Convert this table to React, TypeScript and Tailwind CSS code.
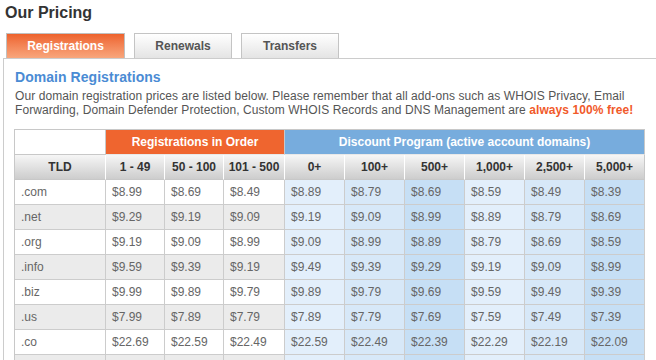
import React from "react";

const rows: [string, string[]][] = [
  [".com", ["8.99", "8.69", "8.49", "8.89", "8.79", "8.69", "8.59", "8.49", "8.39"]],
  [".net", ["9.29", "9.19", "9.09", "9.19", "9.09", "8.99", "8.89", "8.79", "8.69"]],
  [".org", ["9.19", "9.09", "8.99", "9.09", "8.99", "8.89", "8.79", "8.69", "8.59"]],
  [".info", ["9.59", "9.39", "9.19", "9.49", "9.39", "9.29", "9.19", "9.09", "8.99"]],
  [".biz", ["9.99", "9.89", "9.79", "9.89", "9.79", "9.69", "9.59", "9.49", "9.39"]],
  [".us", ["7.99", "7.89", "7.79", "7.89", "7.79", "7.69", "7.59", "7.49", "7.39"]],
  [".co", ["22.69", "22.59", "22.49", "22.59", "22.49", "22.39", "22.29", "22.19", "22.09"]],
  [".me", ["15.99", "15.89", "15.79", "15.89", "15.79", "15.69", "15.59", "15.49", "15.39"]],
];

const blueBg = [
  "bg-[#e3effb]",
  "bg-[#d7e8f8]",
  "bg-[#c6dff5]",
  "bg-[#e3effb]",
  "bg-[#d7e8f8]",
  "bg-[#c6dff5]",
];

const colWidths = [91, 59, 59, 61, 60, 60, 60, 60, 60, 60];
const subHeads = ["TLD", "1 - 49", "50 - 100", "101 - 500", "0+", "100+", "500+", "1,000+", "2,500+", "5,000+"];

export default function App() {
  return (
    <div
      className="w-[656px] h-[360px] overflow-hidden bg-white px-[3px]"
      style={{ fontFamily: '"Liberation Sans", Arial, sans-serif' }}
    >
      <div className="pt-[4px] ml-[2px] text-[16px] leading-[18px] font-bold text-[#333]">Our Pricing</div>
      <div className="mt-[11px] ml-[3px] flex gap-[9px] h-[25px]">
        <div className="w-[119px] h-[25px] flex items-center justify-center border border-[#c0c0c0] border-b-0 bg-linear-to-b from-[#ed622c] to-[#f8a67c] text-white text-[12px] font-bold">
          Registrations
        </div>
        <div className="w-[98px] h-[25px] flex items-center justify-center border border-[#c4c4c4] border-b-0 bg-linear-to-b from-white to-[#e4e4e4] text-[#555] text-[12px] font-bold">
          Renewals
        </div>
        <div className="w-[98px] h-[25px] flex items-center justify-center border border-[#c4c4c4] border-b-0 bg-linear-to-b from-white to-[#e4e4e4] text-[#555] text-[12px] font-bold">
          Transfers
        </div>
      </div>
      <div className="border-t border-l border-[#cccccc] mr-[-10px] pl-[10px] pt-[10px] pb-4">
        <div className="ml-px text-[14px] leading-[16px] font-bold text-[#4a8bd4] tracking-[0.05px]">Domain Registrations</div>
        <p className="ml-px mt-[5px] w-[634px] text-[12px] leading-[13.6px] text-[#555] tracking-[0.08px]">
          Our domain registration prices are listed below. Please remember that all add-ons such as WHOIS Privacy, Email
          Forwarding, Domain Defender Protection, Custom WHOIS Records and DNS Management are{" "}
          <span className="font-bold text-[#f15a2b]">always 100% free!</span>
        </p>
        <table className="mt-[12px] table-fixed border-separate border-spacing-0 border-t border-l border-[#c8c8c8] w-[631px] text-[12px]">
          <colgroup>
            {colWidths.map((w, i) => (
              <col key={i} style={{ width: w }} />
            ))}
          </colgroup>
          <thead>
            <tr>
              <th className="h-[25px] p-0 bg-white border-r border-b border-[#c8c8c8]"></th>
              <th
                colSpan={3}
                className="h-[25px] p-0 bg-[#ef652f] text-white font-bold border-r border-b border-r-[#c8c8c8] border-b-[#e8e8e8]"
              >
                Registrations in Order
              </th>
              <th
                colSpan={6}
                className="h-[25px] p-0 bg-[#77acdd] text-white font-bold border-r border-b border-r-[#c8c8c8] border-b-[#e8e8e8]"
              >
                Discount Program (active account domains)
              </th>
            </tr>
            <tr>
              {subHeads.map((h, i) => (
                <th
                  key={h}
                  className={`h-[25px] p-0 bg-linear-to-b from-[#f6f6f6] to-[#cdcdcd] text-[#333] font-bold border-b border-b-[#c8c8c8] border-r ${
                    i === subHeads.length - 1 ? "border-r-[#c8c8c8]" : "border-r-white"
                  }`}
                >
                  {h}
                </th>
              ))}
            </tr>
          </thead>
          <tbody>
            {rows.map(([tld, prices], r) => {
              const grey = r % 2 === 1;
              const leftBg = grey ? "bg-[#ebebeb]" : "bg-white";
              return (
                <tr key={tld}>
                  <td className={`h-[25px] py-0 pl-[6px] text-[#666] border-r border-b border-[#cccccc] ${leftBg}`}>{tld}</td>
                  {prices.map((p, i) => (
                    <td
                      key={i}
                      className={`h-[25px] py-0 pl-[6px] text-[#666] border-r border-b border-[#cccccc] whitespace-nowrap ${
                        i < 3 ? leftBg : blueBg[i - 3]
                      }`}
                    >
                      ${p}
                    </td>
                  ))}
                </tr>
              );
            })}
          </tbody>
        </table>
      </div>
    </div>
  );
}
